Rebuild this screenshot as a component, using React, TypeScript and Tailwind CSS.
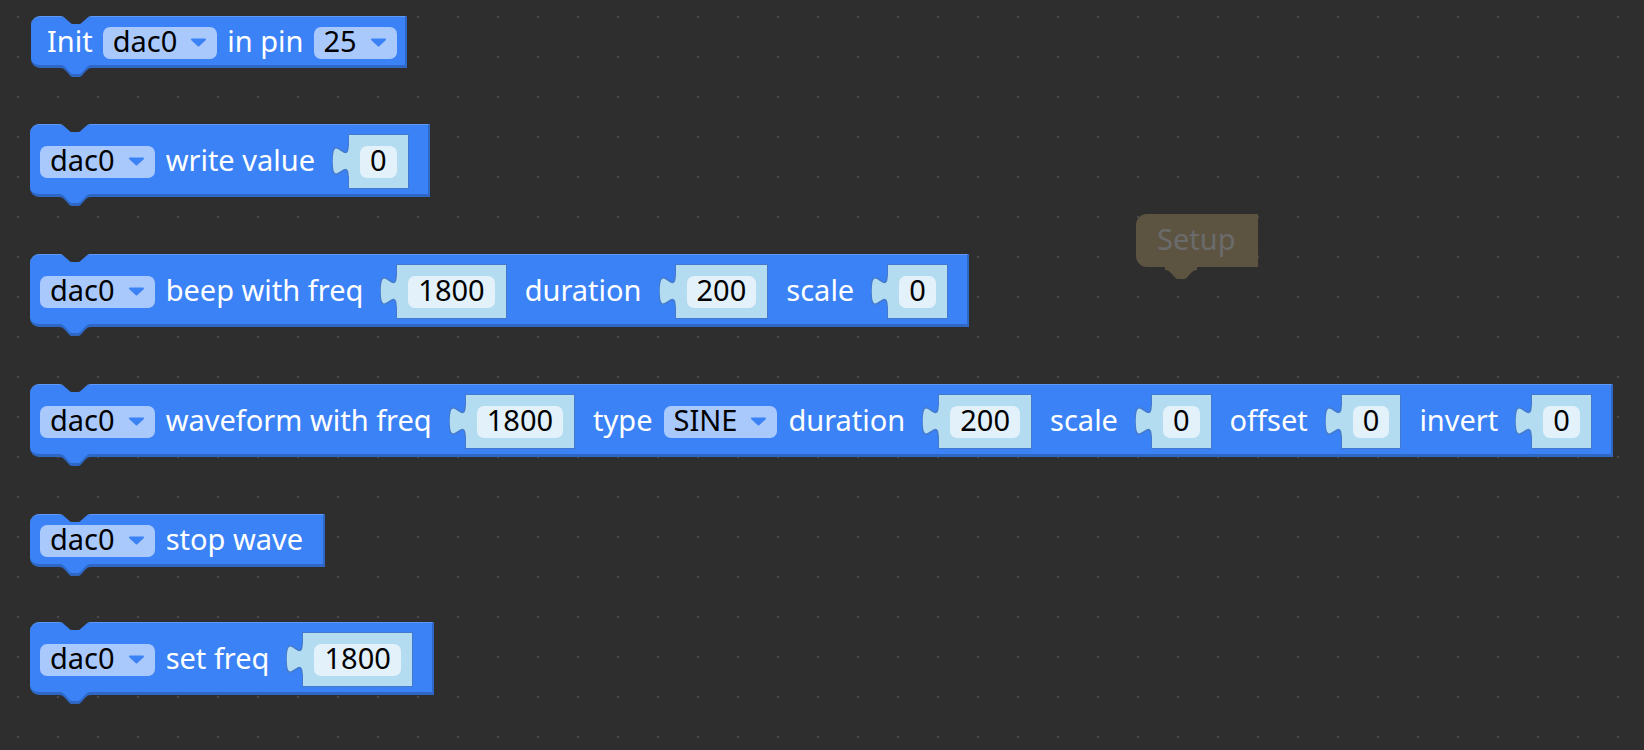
import React from "react";

const BLUE = "#3b82f6";

function Arrow() {
  return (
    <svg width="17" height="9" viewBox="0 0 17 9" className="shrink-0">
      <path d="M2 1.5 H15 L8.5 7.5 Z" fill={BLUE} stroke={BLUE} strokeWidth="2" strokeLinejoin="round" />
    </svg>
  );
}

function Pill({ label }: { label: string }) {
  return (
    <span className="flex h-[32px] shrink-0 items-center gap-[13px] rounded-[7px] bg-[#a9c8fc] pl-[10px] pr-[10px] text-black">
      <span className="pb-[4px] leading-none">{label}</span>
      <Arrow />
    </span>
  );
}

function Txt({ t }: { t: string }) {
  return <span className="shrink-0 whitespace-nowrap pb-[4px] leading-none text-white">{t}</span>;
}

function Socket({ v }: { v: string }) {
  return (
    <span className="relative ml-[22px] mr-[7px] flex h-[55px] shrink-0 items-center border border-[#4479cc] bg-[#b4dcf0] px-[11px]">
      <svg className="absolute left-[-17px] top-[11px]" width="17" height="30" viewBox="0 0 17 30">
        <path d="M17 0 H16 c0,20 -16,-16 -16,15 s16,-5 16,15 H17 Z" fill="#b4dcf0" />
        <path d="M16 0 c0,20 -16,-16 -16,15 s16,-5 16,15" fill="none" stroke="#4479cc" strokeWidth="1.5" />
      </svg>
      <span className="flex h-[32px] items-center rounded-[7px] bg-[#e2f1fa] px-[10px] text-black">
        <span className="pb-[4px] leading-none">{v}</span>
      </span>
    </span>
  );
}

function TopNotch() {
  return (
    <svg className="absolute left-[29px] top-[-1px]" width="32" height="8" viewBox="0 0 32 8">
      <path d="M0,0 C3,0 4,1 6,3 L10,6.5 C11,7.5 12,8 14,8 H18 C20,8 21,7.5 22,6.5 L26,3 C28,1 29,0 32,0 Z" fill="#2e2e2e" />
    </svg>
  );
}

function BottomTab({ fill = BLUE, dark = "#2f67c4" }: { fill?: string; dark?: string }) {
  return (
    <svg className="absolute left-[29px] top-full" width="32" height="13" viewBox="0 0 32 13">
      <path d="M0,0 L0,3 C3,3 4,4 6,6 L10,10.5 C11,11.5 12,12 14,12 H18 C20,12 21,11.5 22,10.5 L26,6 C28,4 29,3 32,3 L32,0 Z" fill={dark} />
      <path d="M0,0 C3,0 4,1 6,3 L10,7.5 C11,8.5 12,9 14,9 H18 C20,9 21,8.5 22,7.5 L26,3 C28,1 29,0 32,0 Z" fill={fill} />
    </svg>
  );
}

const blockBase =
  "absolute flex items-center rounded-l-[9px] border-t border-b-[3px] border-r-2 border-t-[#5f98f7] border-b-[#2f67c4] border-r-[#2f67c4] bg-[#3b82f6] pt-[9px]";

export default function App() {
  return (
    <div className="relative h-[750px] w-[1644px] overflow-hidden bg-[#2e2e2e] bg-[radial-gradient(circle,#4a4a4a_1px,transparent_1.6px)] bg-[size:40px_40px] bg-[position:-2px_-3px] font-['Noto_Sans',sans-serif] text-[29px]">
      {/* Block 1 */}
      <div className={`${blockBase} left-[31px] top-[16px] gap-[10px] pb-[6px] pl-[16px] pr-[8px]`}>
        <TopNotch />
        <Txt t="Init" />
        <Pill label="dac0" />
        <Txt t="in pin" />
        <Pill label="25" />
        <BottomTab />
      </div>

      {/* Block 2 */}
      <div className={`${blockBase} left-[30px] top-[124px] gap-[11px] pb-[5px] pl-[10px] pr-[12px]`}>
        <TopNotch />
        <Pill label="dac0" />
        <Txt t="write value" />
        <Socket v="0" />
        <BottomTab />
      </div>

      {/* Block 3 */}
      <div className={`${blockBase} left-[30px] top-[254px] gap-[11px] pb-[5px] pl-[10px] pr-[12px]`}>
        <TopNotch />
        <Pill label="dac0" />
        <Txt t="beep with freq" />
        <Socket v="1800" />
        <Txt t="duration" />
        <Socket v="200" />
        <Txt t="scale" />
        <Socket v="0" />
        <BottomTab />
      </div>

      {/* Block 4 */}
      <div className={`${blockBase} left-[30px] top-[384px] gap-[11px] pb-[5px] pl-[10px] pr-[12px]`}>
        <TopNotch />
        <Pill label="dac0" />
        <Txt t="waveform with freq" />
        <Socket v="1800" />
        <Txt t="type" />
        <Pill label="SINE" />
        <Txt t="duration" />
        <Socket v="200" />
        <Txt t="scale" />
        <Socket v="0" />
        <Txt t="offset" />
        <Socket v="0" />
        <Txt t="invert" />
        <Socket v="0" />
        <BottomTab />
      </div>

      {/* Block 5 */}
      <div className={`${blockBase} left-[30px] top-[514px] gap-[11px] pb-[7px] pl-[10px] pr-[20px]`}>
        <TopNotch />
        <Pill label="dac0" />
        <Txt t="stop wave" />
        <BottomTab />
      </div>

      {/* Block 6 */}
      <div className={`${blockBase} left-[30px] top-[622px] gap-[11px] pb-[5px] pl-[10px] pr-[12px]`}>
        <TopNotch />
        <Pill label="dac0" />
        <Txt t="set freq" />
        <Socket v="1800" />
        <BottomTab />
      </div>

      {/* Ghost Setup block */}
      <div className="absolute left-[1136px] top-[214px] flex h-[53px] items-center rounded-l-[11px] bg-[#5c5441] pl-[21px] pr-[22px]">
        <span className="pb-[4px] leading-none text-[#6b6b6b]">Setup</span>
        <BottomTab fill="#5c5441" dark="#5c5441" />
      </div>
    </div>
  );
}
